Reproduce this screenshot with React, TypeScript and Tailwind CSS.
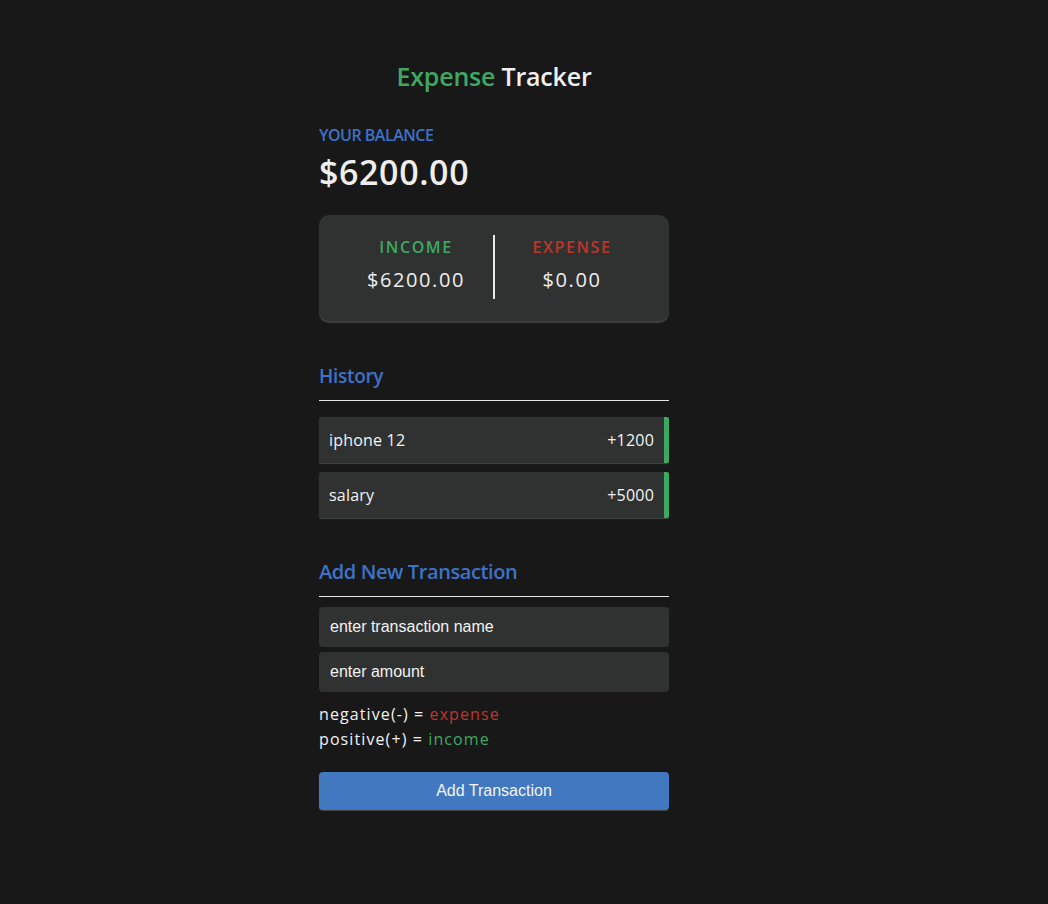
import React from "react";

const P = { fontFamily: '"Open Sans", "Noto Sans", sans-serif' };
const A = { fontFamily: '"Liberation Sans", Arial, sans-serif' };

export default function App() {
  return (
    <div className="min-h-[904px] w-full bg-[#181818] text-[#eeeeee]" style={P}>
      <div className="flex justify-center pr-[60px]">
        <div className="w-[350px] pt-[58px]">
          <h2 className="text-center text-[25px] font-semibold leading-[36px] tracking-[-0.2px]">
            <span className="text-[#3ea861]">Expense</span> <span className="text-[#f0f0f0]">Tracker</span>
          </h2>
          <div className="mt-[29px] text-[16px] font-semibold uppercase leading-[24px] tracking-[-0.5px] text-[#3d72c9]">Your Balance</div>
          <div className="mt-[2px] text-[34px] font-semibold leading-[46px] tracking-[0.6px]">$6200.00</div>
          <div className="mt-[20px] flex h-[106px] items-start rounded-[10px] bg-[#303231] px-[20px] pt-[20px] shadow-[0_2px_1px_rgba(90,90,90,0.6)]">
            <div className="flex flex-1 flex-col items-center">
              <div className="text-[16px] font-semibold leading-[24px] tracking-[1.6px] text-[#3ea861]">INCOME</div>
              <div className="mt-[7px] text-[20px] leading-[28px] tracking-[1.6px]">$6200.00</div>
            </div>
            <div className="h-[64px] w-[2px] bg-[#e8e8e8]" />
            <div className="flex flex-1 flex-col items-center">
              <div className="text-[16px] font-semibold leading-[24px] tracking-[1.6px] text-[#c0352a]">EXPENSE</div>
              <div className="mt-[7px] text-[20px] leading-[28px] tracking-[1.6px]">$0.00</div>
            </div>
          </div>
          <h3 className="mt-[41px] text-[19px] font-semibold leading-[28px] tracking-[-0.3px] text-[#3d72c9]">History</h3>
          <div className="mt-[10px] h-[1px] bg-[#e8e8e8]" />
          <div className="mt-[16px] flex flex-col gap-[9px]">
            {[["iphone 12", "+1200"], ["salary", "+5000"]].map(([n, v]) => (
              <div key={n} className="flex h-[46px] items-center justify-between rounded-[2px] border-r-[5px] border-[#3ea861] bg-[#303231] pl-[10px] pr-[10px] text-[16px] tracking-[0.2px] text-[#f2f2f2] shadow-[0_1px_1px_rgba(90,90,90,0.7)]">
                <span>{n}</span>
                <span>{v}</span>
              </div>
            ))}
          </div>
          <h3 className="mt-[40px] text-[20px] font-semibold leading-[28px] tracking-[-0.4px] text-[#3d72c9]">Add New Transaction</h3>
          <div className="mt-[10px] h-[1px] bg-[#e8e8e8]" />
          <div className="mt-[10px] flex flex-col gap-[5px]" style={A}>
            <div className="flex h-[40px] items-center rounded-[4px] bg-[#303231] px-[11px] text-[16px] text-[#f2f2f2]">enter transaction name</div>
            <div className="flex h-[40px] items-center rounded-[4px] bg-[#303231] px-[11px] text-[16px] text-[#f2f2f2]">enter amount</div>
          </div>
          <div className="mt-[10px] text-[16px] leading-[25px] tracking-[1.1px] text-[#f2f2f2]">
            <div>negative(-) = <span className="text-[#c0352a]">expense</span></div>
            <div>positive(+) = <span className="text-[#3ea861]">income</span></div>
          </div>
          <div className="mt-[20px] flex h-[38px] items-center justify-center rounded-[4px] bg-[#4178c0] text-[16px] text-[#f4f4f4] shadow-[0_1px_1px_rgba(90,90,90,0.7)]" style={A}>
            Add Transaction
          </div>
        </div>
      </div>
    </div>
  );
}
